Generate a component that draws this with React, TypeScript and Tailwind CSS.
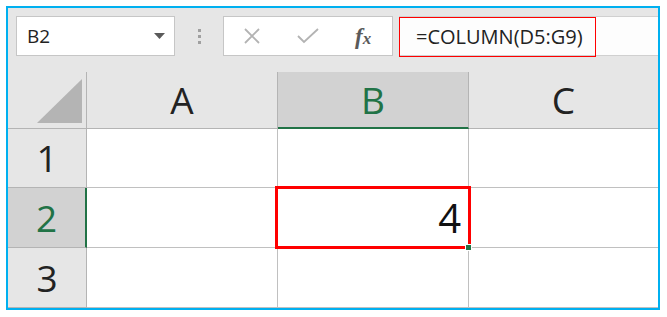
import React from 'react';

const cols = ['A', 'B', 'C'];
const rows = [1, 2, 3];

function Corner() {
  return (
    <svg width="45" height="44" viewBox="0 0 45 44" className="block">
      <polygon points="45,0 45,44 0,44" fill="#b4b4b4" />
    </svg>
  );
}

export default function App() {
  const font = { fontFamily: '"Open Sans", "Noto Sans", sans-serif' };

  return (
    <div className="w-[667px] h-[317px] bg-white pt-[6px] pl-[6px]" style={font}>
      <div className="relative w-[654px] h-[304px] border-2 border-[#00b0f0] bg-[#e6e6e6] flex flex-col overflow-hidden">
        {/* Toolbar */}
        <div className="h-[64px] pt-[8px] pl-[8px] flex items-start">
          {/* Name box */}
          <div className="w-[159px] h-[40px] bg-white border border-[#c6c6c6] flex items-center justify-between pl-[10px] pr-[9px]">
            <span className="text-[19px] text-[#222]">B2</span>
            <svg width="11" height="6" viewBox="0 0 11 6">
              <polygon points="0,0 11,0 5.5,6" fill="#5a5a5a" />
            </svg>
          </div>

          {/* Dots */}
          <div className="w-[48px] h-[40px] flex flex-col items-center justify-center gap-[3px]">
            <div className="w-[3px] h-[3px] bg-[#a0a0a0]" />
            <div className="w-[3px] h-[3px] bg-[#a0a0a0]" />
            <div className="w-[3px] h-[3px] bg-[#a0a0a0]" />
          </div>

          {/* Cancel / Enter / fx */}
          <div className="w-[170px] h-[40px] bg-white border border-[#c6c6c6] flex items-center pl-[19px]">
            <svg width="18" height="16" viewBox="0 0 18 16">
              <path d="M2 1 L16 15 M16 1 L2 15" stroke="#b3b3b3" strokeWidth="1.8" fill="none" />
            </svg>
            <svg width="22" height="16" viewBox="0 0 22 16" className="ml-[36px]">
              <path d="M1 8 L7 14 L21 1" stroke="#b3b3b3" strokeWidth="1.8" fill="none" />
            </svg>
            <span
              className="ml-[36px] text-[23px] italic font-bold text-[#5a5a5a] leading-none"
              style={{ fontFamily: '"Liberation Serif", serif' }}
            >
              f<span className="text-[17px]">x</span>
            </span>
          </div>

          {/* Formula input */}
          <div className="ml-[6px] flex-1 h-[40px] bg-[#fdfdfd] border-y border-[#d0d0d0] relative">
            <div className="absolute left-0 top-0 w-[197px] h-[40px] border border-[#ff0000] flex items-center pl-[16px]">
              <span className="text-[20px] text-[#222]">=COLUMN(D5:G9)</span>
            </div>
          </div>
        </div>

        {/* Grid */}
        <div className="flex flex-col">
          {/* Header row */}
          <div className="flex h-[57px]">
            <div className="w-[79px] border-r border-b border-[#b4b4b4] flex items-end justify-end pr-[4px] pb-[5px]">
              <Corner />
            </div>
            {cols.map((c) => (
              <div
                key={c}
                className={
                  c === 'B'
                    ? 'w-[191px] bg-[#d2d2d2] border-r border-[#b4b4b4] border-b-2 border-b-[#217346] flex items-center justify-center text-[37px] text-[#217346]'
                    : c === 'C'
                    ? 'flex-1 border-b border-[#b4b4b4] flex items-center justify-center text-[37px] text-[#222]'
                    : 'w-[191px] border-r border-b border-[#b4b4b4] flex items-center justify-center text-[37px] text-[#222]'
                }
              >
                {c}
              </div>
            ))}
          </div>

          {/* Rows */}
          {rows.map((r) => (
            <div key={r} className={r === 1 ? 'flex h-[59px]' : 'flex h-[60px]'}>
              <div
                className={
                  r === 2
                    ? 'w-[79px] bg-[#d2d2d2] border-b border-[#b4b4b4] border-r-2 border-r-[#217346] flex items-center justify-center text-[37px] text-[#217346]'
                    : 'w-[79px] border-r border-b border-[#b4b4b4] flex items-center justify-center text-[37px] text-[#222]'
                }
              >
                {r}
              </div>
              <div className="w-[191px] bg-white border-r border-b border-[#c0c0c0]" />
              <div className="w-[191px] bg-white border-r border-b border-[#c0c0c0] flex items-center justify-end pr-[7px] text-[40px] text-[#111]">
                {r === 2 ? '4' : ''}
              </div>
              <div className="flex-1 bg-white border-b border-[#c0c0c0]" />
            </div>
          ))}
        </div>

        {/* Selection highlight */}
        <div className="absolute left-[267px] top-[178px] w-[196px] h-[63px] border-[3px] border-[#ff0000]" />
        <div className="absolute left-[457px] top-[236px] w-[7px] h-[7px] bg-[#217346] border border-white" />
      </div>
    </div>
  );
}
